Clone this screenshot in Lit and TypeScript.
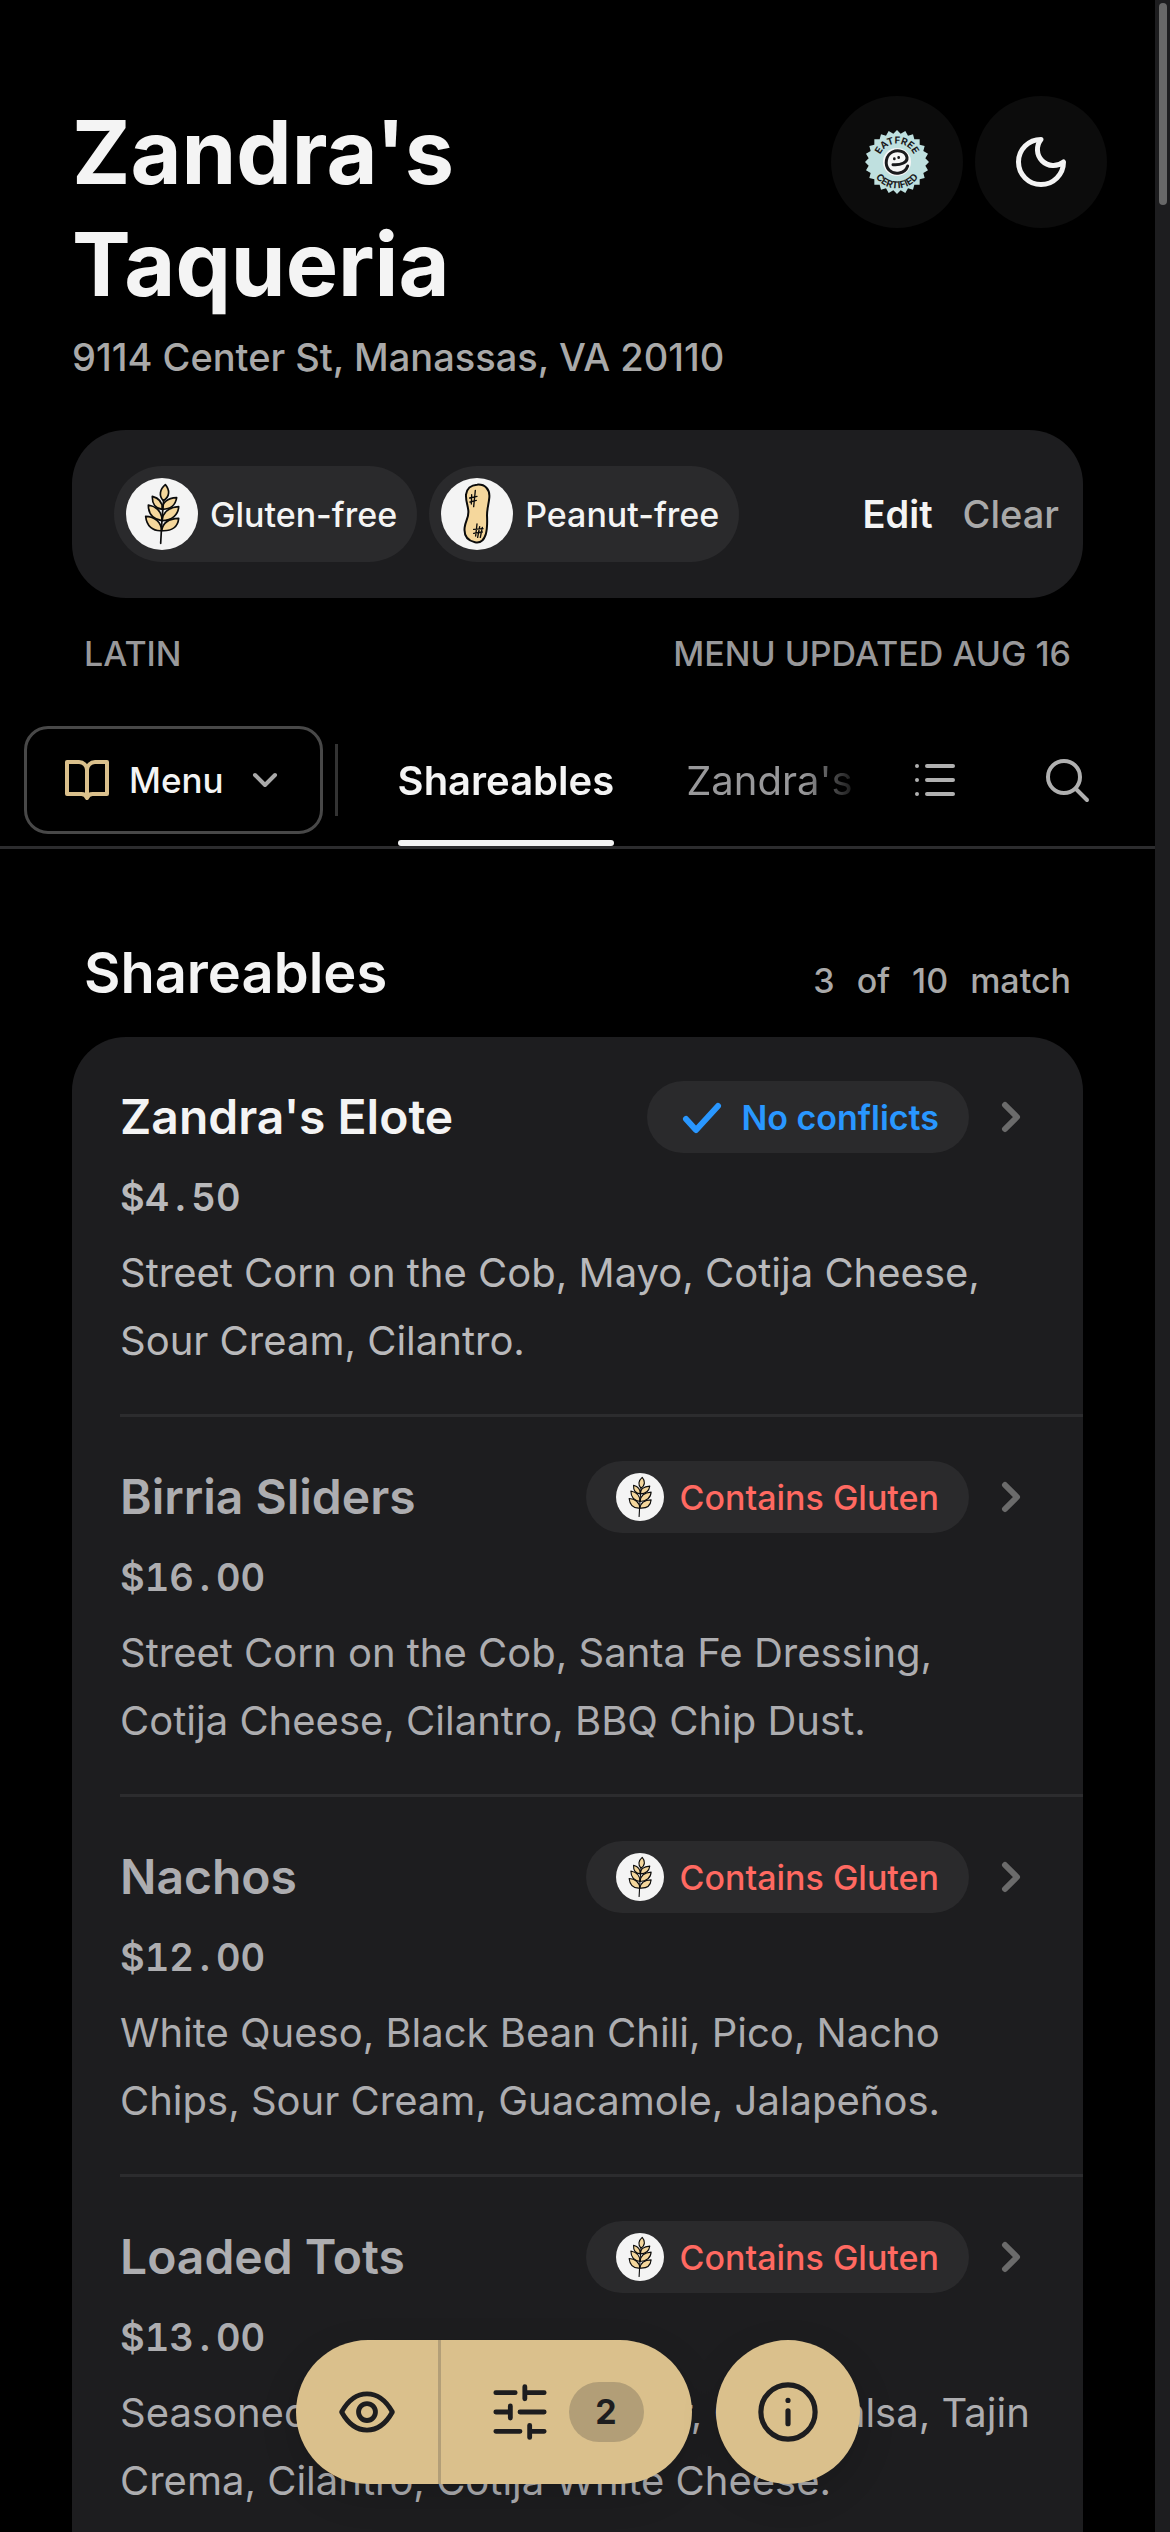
import { LitElement, html, svg, css } from 'lit';
import { customElement, property } from 'lit/decorators.js';
import { classMap } from 'lit/directives/class-map.js';

interface Dish {
    name: string;
    price: string;
    description: string;
    conflict?: string;
}

const dishes: Dish[] = [
    {
        name: "Zandra's Elote",
        price: '4.50',
        description: 'Street Corn on the Cob, Mayo, Cotija Cheese, Sour Cream, Cilantro.',
    },
    {
        name: 'Birria Sliders',
        price: '16.00',
        description: 'Street Corn on the Cob, Santa Fe Dressing, Cotija Cheese, Cilantro, BBQ Chip Dust.',
        conflict: 'Contains Gluten',
    },
    {
        name: 'Nachos',
        price: '12.00',
        description: 'White Queso, Black Bean Chili, Pico, Nacho Chips, Sour Cream, Guacamole, Jalapeños.',
        conflict: 'Contains Gluten',
    },
    {
        name: 'Loaded Tots',
        price: '13.00',
        description: 'Seasoned Tater Tots, Cheddar, Corn Salsa, Tajin Crema, Cilantro, Cotija White Cheese.',
        conflict: 'Contains Gluten',
    },
];

const wheat = html`
    <svg viewBox="0 0 216 216" aria-hidden="true">
        <circle cx="108" cy="108" r="108" fill="#f4f4f4"/>
        <g fill="#f5d79c" stroke="#0b0b0b" stroke-width="5" stroke-linejoin="round" stroke-linecap="round">
            <path d="M112 68C98 54 101 34 118 20C132 36 132 56 112 68Z"/>
            <path d="M109 94C88 92 78 76 79 55C98 60 110 72 109 94Z"/>
            <path d="M109 94C108 74 124 60 152 59C149 80 134 94 109 94Z"/>
            <path d="M108 128C82 124 67 108 67 81C92 86 108 102 108 128Z"/>
            <path d="M108 128C110 104 128 88 158 86C157 110 138 128 108 128Z"/>
            <path d="M107 158C80 160 62 144 59 115C86 116 106 132 107 158Z"/>
            <path d="M107 158C110 136 128 122 158 121C156 146 138 160 107 158Z"/>
            <path d="M113 66L108 124L104 196" fill="none"/>
        </g>
    </svg>`;

const peanut = html`
    <svg viewBox="0 0 216 216" aria-hidden="true">
        <circle cx="108" cy="108" r="108" fill="#f4f4f4"/>
        <path d="M108 20C132 18 147 34 145 58C143 80 138 92 138 112C139 132 140 150 134 170C128 188 116 196 102 193C80 188 68 172 71 148C74 126 84 118 82 98C80 80 74 68 75 50C77 32 90 21 108 20Z" fill="#f5d79c" stroke="#0b0b0b" stroke-width="6"/>
        <path d="M103 37L98 86M92 50L91 78M86 60L108 55M87 72L106 67M108 138L104 174M116 146L110 178M124 148L118 178M98 154L126 152M98 166L124 162" fill="none" stroke="#0b0b0b" stroke-width="4" stroke-linecap="round"/>
    </svg>`;

// Scalloped edge of the certification seal
const sealPoints = Array.from({ length: 48 }, (_, i) => {
    const angle = (i * Math.PI) / 24 - Math.PI / 2;
    const radius = i % 2 ? 86 : 96;
    return `${Math.round(96 + radius * Math.cos(angle))},${Math.round(96 + radius * Math.sin(angle))}`;
}).join(' ');

const seal = html`
    <svg class="seal" viewBox="0 0 192 192" aria-hidden="true">
        <polygon points="${sealPoints}" fill="#bfe0df"/>
        <circle cx="96" cy="96" r="42" fill="#f6f6f6"/>
        <path d="M84 104C106 106 128 98 126 82C122 64 100 58 82 66C62 76 58 104 72 120C88 136 120 132 128 108" fill="none" stroke="#1a1a1c" stroke-width="9" stroke-linecap="round"/>
        <path d="M88 86v1M101 82v1" stroke="#1a1a1c" stroke-width="8" stroke-linecap="round"/>
        <defs>
            <path id="seal-top" d="M41 96A55 55 0 0 1 151 96"/>
            <path id="seal-bottom" d="M17 96A79 79 0 0 0 175 96"/>
        </defs>
        <g font-size="29" font-weight="700" fill="#1a1a1c" text-anchor="middle">
            <text><textPath href="#seal-top" startOffset="50%">EATFREE</textPath></text>
            <text><textPath href="#seal-bottom" startOffset="50%">CERTIFIED</textPath></text>
        </g>
    </svg>`;

const strokes = {
    moon: svg`<path d="M12 3a6.4 6.4 0 0 0 9 9 9 9 0 1 1-9-9Z"/>`,
    book: svg`<path d="M12 7v14M2 3h6a4 4 0 0 1 4 4a4 4 0 0 1 4-4h6v16h-7a3 3 0 0 0-3 2a3 3 0 0 0-3-2H2Z"/>`,
    down: svg`<path d="M6.500 9.500l5 5 5-5"/>`,
    right: svg`<path d="M9 6l6 6-6 6"/>`,
    check: svg`<path d="M4.500 13l5 5.500L20.500 6.500"/>`,
    list: svg`<path d="M8 5h13M8 12h13M8 19h13M3 5h0M3 12h0M3 19h0"/>`,
    search: svg`<circle cx="10.500" cy="10.500" r="8"/><path d="M16.500 16.500L22 22"/>`,
    eye: svg`<path d="M1.500 12C4 7.500 7.500 4.500 12 4.500S20 7.500 22.500 12C20 16.500 16.500 19.500 12 19.500S4 16.500 1.500 12Z"/><circle cx="12" cy="12" r="3.500"/>`,
    sliders: svg`<path d="M2 4h8M14 4h8M14 1.500v5M2 12h5M8 9.500v5M12 12h10M2 20h10M16 20h6M16 17.500v5"/>`,
    info: svg`<circle cx="12" cy="12" r="10.500"/><path d="M12 11.500v5M12 7.500v0"/>`,
};

const icon = (name: keyof typeof strokes) => html`
    <svg class="icon ${name}" viewBox="0 0 24 24" aria-hidden="true">${strokes[name]}</svg>`;

const shared = css`
    * {
        box-sizing: border-box;
    }

    button {
        font: inherit;
        color: inherit;
        background: none;
        border: 0;
        padding: 0;
        cursor: pointer;
    }

    svg {
        display: block;
        flex: none;
    }

    .icon {
        width: 48px;
        height: 48px;
        fill: none;
        stroke: currentColor;
        stroke-width: 2;
        stroke-linecap: round;
        stroke-linejoin: round;
    }
`;

@customElement('menu-item')
class MenuItem extends LitElement {
    @property({ attribute: false }) dish!: Dish;

    static styles = [shared, css`
    :host {
        display: block;
        margin-left: 48px;
        padding: 44px 48px 39px 0;
        border-bottom: 3px solid #2c2c2e;
    }

    .top {
        display: flex;
        align-items: center;
        width: 100%;
        height: 72px;
        text-align: left;
    }

    h3 {
        flex: 1;
        margin: 0;
        font-size: 48px;
        line-height: 60px;
        font-weight: 600;
    }

    .pill {
        display: flex;
        align-items: center;
        gap: 16px;
        height: 72px;
        padding: 0 30px;
        border-radius: 36px;
        background: #2a2a2c;
        color: #2997ff;
        font-size: 34px;
        font-weight: 600;
    }

    .pill svg {
        width: 48px;
        height: 48px;
    }

    .check,
    .right {
        stroke-width: 3;
    }

    .right {
        margin-left: 18px;
        color: #6b6b6b;
    }

    .price {
        margin: 14px 0 0;
        color: #b9b9bb;
        font-size: 38px;
        line-height: 60px;
        font-weight: 600;
        font-variant-numeric: tabular-nums;
    }

    .point {
        display: inline-block;
        width: 22px;
        text-align: center;
    }

    .description {
        margin: 12px 0 0;
        color: #b9b9bb;
        font-size: 40px;
        line-height: 68px;
    }

    .conflict h3,
    .conflict .price,
    .conflict .description {
        color: #adadb0;
    }

    .conflict .pill {
        color: #ff6961;
    }

    .conflict .pill {
        font-weight: 500;
    }`];

    render () {
        const { name, price, description, conflict } = this.dish;
        const [dollars, cents] = price.split('.');

        return html`
            <article class=${classMap({ conflict: !!conflict })}>
                <button class="top">
                    <h3>${name}</h3>
                    <span class="pill">${conflict ? wheat : icon('check')}${conflict ?? 'No conflicts'}</span>
                    ${icon('right')}
                </button>
                <p class="price">$${dollars}<span class="point">.</span>${cents}</p>
                <p class="description">${description}</p>
            </article>`;
    }
}

@customElement('app-root')
class AppRoot extends LitElement {
    static styles = [shared, css`
    :host {
        display: flex;
        height: 100vh;
        background: #000;
        color: #f4f4f4;
        font-family: Inter, "Liberation Sans", sans-serif;
    }

    .page {
        flex: 1;
        min-width: 0;
        overflow-y: auto;
        scrollbar-width: none;
    }

    .track {
        width: 15px;
        padding: 3px 3px 3px 4px;
        background: #1d1d1f;
    }

    .thumb {
        height: 8%;
        border-radius: 4px;
        background: #686868;
    }

    header {
        display: flex;
        justify-content: space-between;
        padding: 96px 48px 0 72px;
    }

    h1 {
        max-width: 600px;
        margin: 0;
        font-size: 88px;
        line-height: 112px;
        font-weight: 700;
    }

    .actions {
        display: flex;
        gap: 12px;
    }

    .round {
        display: grid;
        place-items: center;
        width: 132px;
        height: 132px;
        border-radius: 50%;
        background: #0c0c0c;
    }

    .seal {
        width: 64px;
        height: 64px;
    }

    .moon {
        width: 60px;
        height: 60px;
    }

    address {
        padding: 10px 72px 0;
        color: #a9a9a9;
        font-size: 38px;
        line-height: 54px;
        font-style: normal;
        font-weight: 500;
    }

    .filters {
        display: flex;
        align-items: center;
        gap: 12px;
        height: 168px;
        margin: 46px 72px 0;
        padding: 0 24px 0 42px;
        border-radius: 54px;
        background: #1d1d1f;
    }

    .chip {
        display: flex;
        align-items: center;
        gap: 12px;
        height: 96px;
        padding: 0 20px 0 12px;
        border-radius: 48px;
        background: #2a2a2c;
        font-size: 34px;
        font-weight: 500;
    }

    .chip svg {
        width: 72px;
        height: 72px;
    }

    .edit {
        margin-left: auto;
        font-size: 38px;
        font-weight: 600;
    }

    .clear {
        margin-left: 18px;
        color: #a9a9a9;
        font-size: 38px;
        font-weight: 500;
    }

    .meta {
        display: flex;
        justify-content: space-between;
        padding: 32px 84px 0;
        color: #98989a;
        font-size: 34px;
        line-height: 48px;
        font-weight: 500;
    }

    nav {
        display: flex;
        align-items: center;
        height: 135px;
        margin-top: 36px;
        padding: 0 64px 0 24px;
        border-bottom: 3px solid #2c2c2e;
    }

    .menu {
        display: flex;
        align-items: center;
        gap: 18px;
        height: 108px;
        padding: 0 30px 0 36px;
        border: 3px solid #484848;
        border-radius: 24px;
        font-size: 35px;
        font-weight: 500;
    }

    .book {
        color: #dac08c;
    }

    .down {
        color: #a9a9a9;
    }

    .divider {
        width: 3px;
        height: 72px;
        margin-left: 12px;
        background: #333;
    }

    .tabs {
        display: flex;
        flex: 1;
        gap: 72px;
        min-width: 0;
        height: 100%;
        margin-left: 60px;
        overflow: hidden;
        white-space: nowrap;
        mask-image: linear-gradient(to right, #000 calc(100% - 60px), transparent);
    }

    .tab {
        position: relative;
        color: #98989a;
        font-size: 40px;
    }

    .tab.current {
        color: #f4f4f4;
        font-weight: 600;
    }

    .tab.current::after {
        content: "";
        position: absolute;
        right: 0;
        bottom: 0;
        left: 0;
        height: 6px;
        border-radius: 3px;
        background: #f4f4f4;
    }

    .tools {
        display: flex;
        gap: 84px;
        padding-left: 48px;
        color: #b0b0b0;
    }

    .section {
        display: flex;
        align-items: baseline;
        justify-content: space-between;
        padding: 84px 84px 0;
    }

    h2 {
        margin: 0;
        font-size: 56px;
        line-height: 80px;
        font-weight: 600;
    }

    .count {
        display: flex;
        gap: 22px;
        color: #a9a9a9;
        font-size: 34px;
        font-weight: 500;
    }

    .dishes {
        margin: 24px 72px 0;
        border-radius: 54px 54px 0 0;
        background: #1d1d1f;
    }

    .floating {
        position: fixed;
        right: 15px;
        bottom: 48px;
        left: 0;
        display: flex;
        justify-content: center;
        gap: 24px;
        color: #1d1d1f;
    }

    .group {
        display: flex;
        overflow: hidden;
    }

    .group,
    .info-button {
        height: 144px;
        border-radius: 72px;
        background: #dac08c;
        box-shadow: 0 12px 36px rgba(0, 0, 0, 0.15);
    }

    .group button {
        display: flex;
        align-items: center;
        gap: 20px;
        padding: 0 48px 0 50px;
    }

    .group .view {
        padding: 0 42px;
        border-right: 3px solid #b39f78;
    }

    .info-button {
        display: grid;
        place-items: center;
        width: 144px;
    }

    .eye,
    .sliders {
        width: 58px;
        height: 58px;
    }

    .info {
        width: 62px;
        height: 62px;
    }

    .badge {
        width: 75px;
        border-radius: 30px;
        background: #b29e77;
        font-size: 34px;
        line-height: 60px;
        font-weight: 700;
    }`];

    render () {
        return html`
            <main class="page">
                <header>
                    <h1>Zandra's Taqueria</h1>
                    <div class="actions">
                        <button class="round" aria-label="EatFree certified">${seal}</button>
                        <button class="round" aria-label="Dark theme">${icon('moon')}</button>
                    </div>
                </header>
                <address>9114 Center St, Manassas, VA 20110</address>
                <div class="filters">
                    <span class="chip">${wheat}Gluten-free</span>
                    <span class="chip">${peanut}Peanut-free</span>
                    <button class="edit">Edit</button>
                    <button class="clear">Clear</button>
                </div>
                <div class="meta"><span>LATIN</span><span>MENU UPDATED AUG 16</span></div>
                <nav>
                    <button class="menu">${icon('book')}Menu${icon('down')}</button>
                    <span class="divider"></span>
                    <div class="tabs">
                        <button class="tab current">Shareables</button>
                        <button class="tab">Zandra's</button>
                    </div>
                    <div class="tools">
                        <button aria-label="All sections">${icon('list')}</button>
                        <button aria-label="Search">${icon('search')}</button>
                    </div>
                </nav>
                <div class="section">
                    <h2>Shareables</h2>
                    <span class="count"><span>3</span> <span>of</span> <span>10</span> <span>match</span></span>
                </div>
                <div class="dishes">
                    ${dishes.map((dish) => html`<menu-item .dish=${dish}></menu-item>`)}
                </div>
            </main>
            <div class="track"><div class="thumb"></div></div>
            <div class="floating">
                <div class="group">
                    <button class="view" aria-label="View options">${icon('eye')}</button>
                    <button aria-label="Filters">${icon('sliders')}<span class="badge">2</span></button>
                </div>
                <button class="info-button" aria-label="Information">${icon('info')}</button>
            </div>`;
    }
}
